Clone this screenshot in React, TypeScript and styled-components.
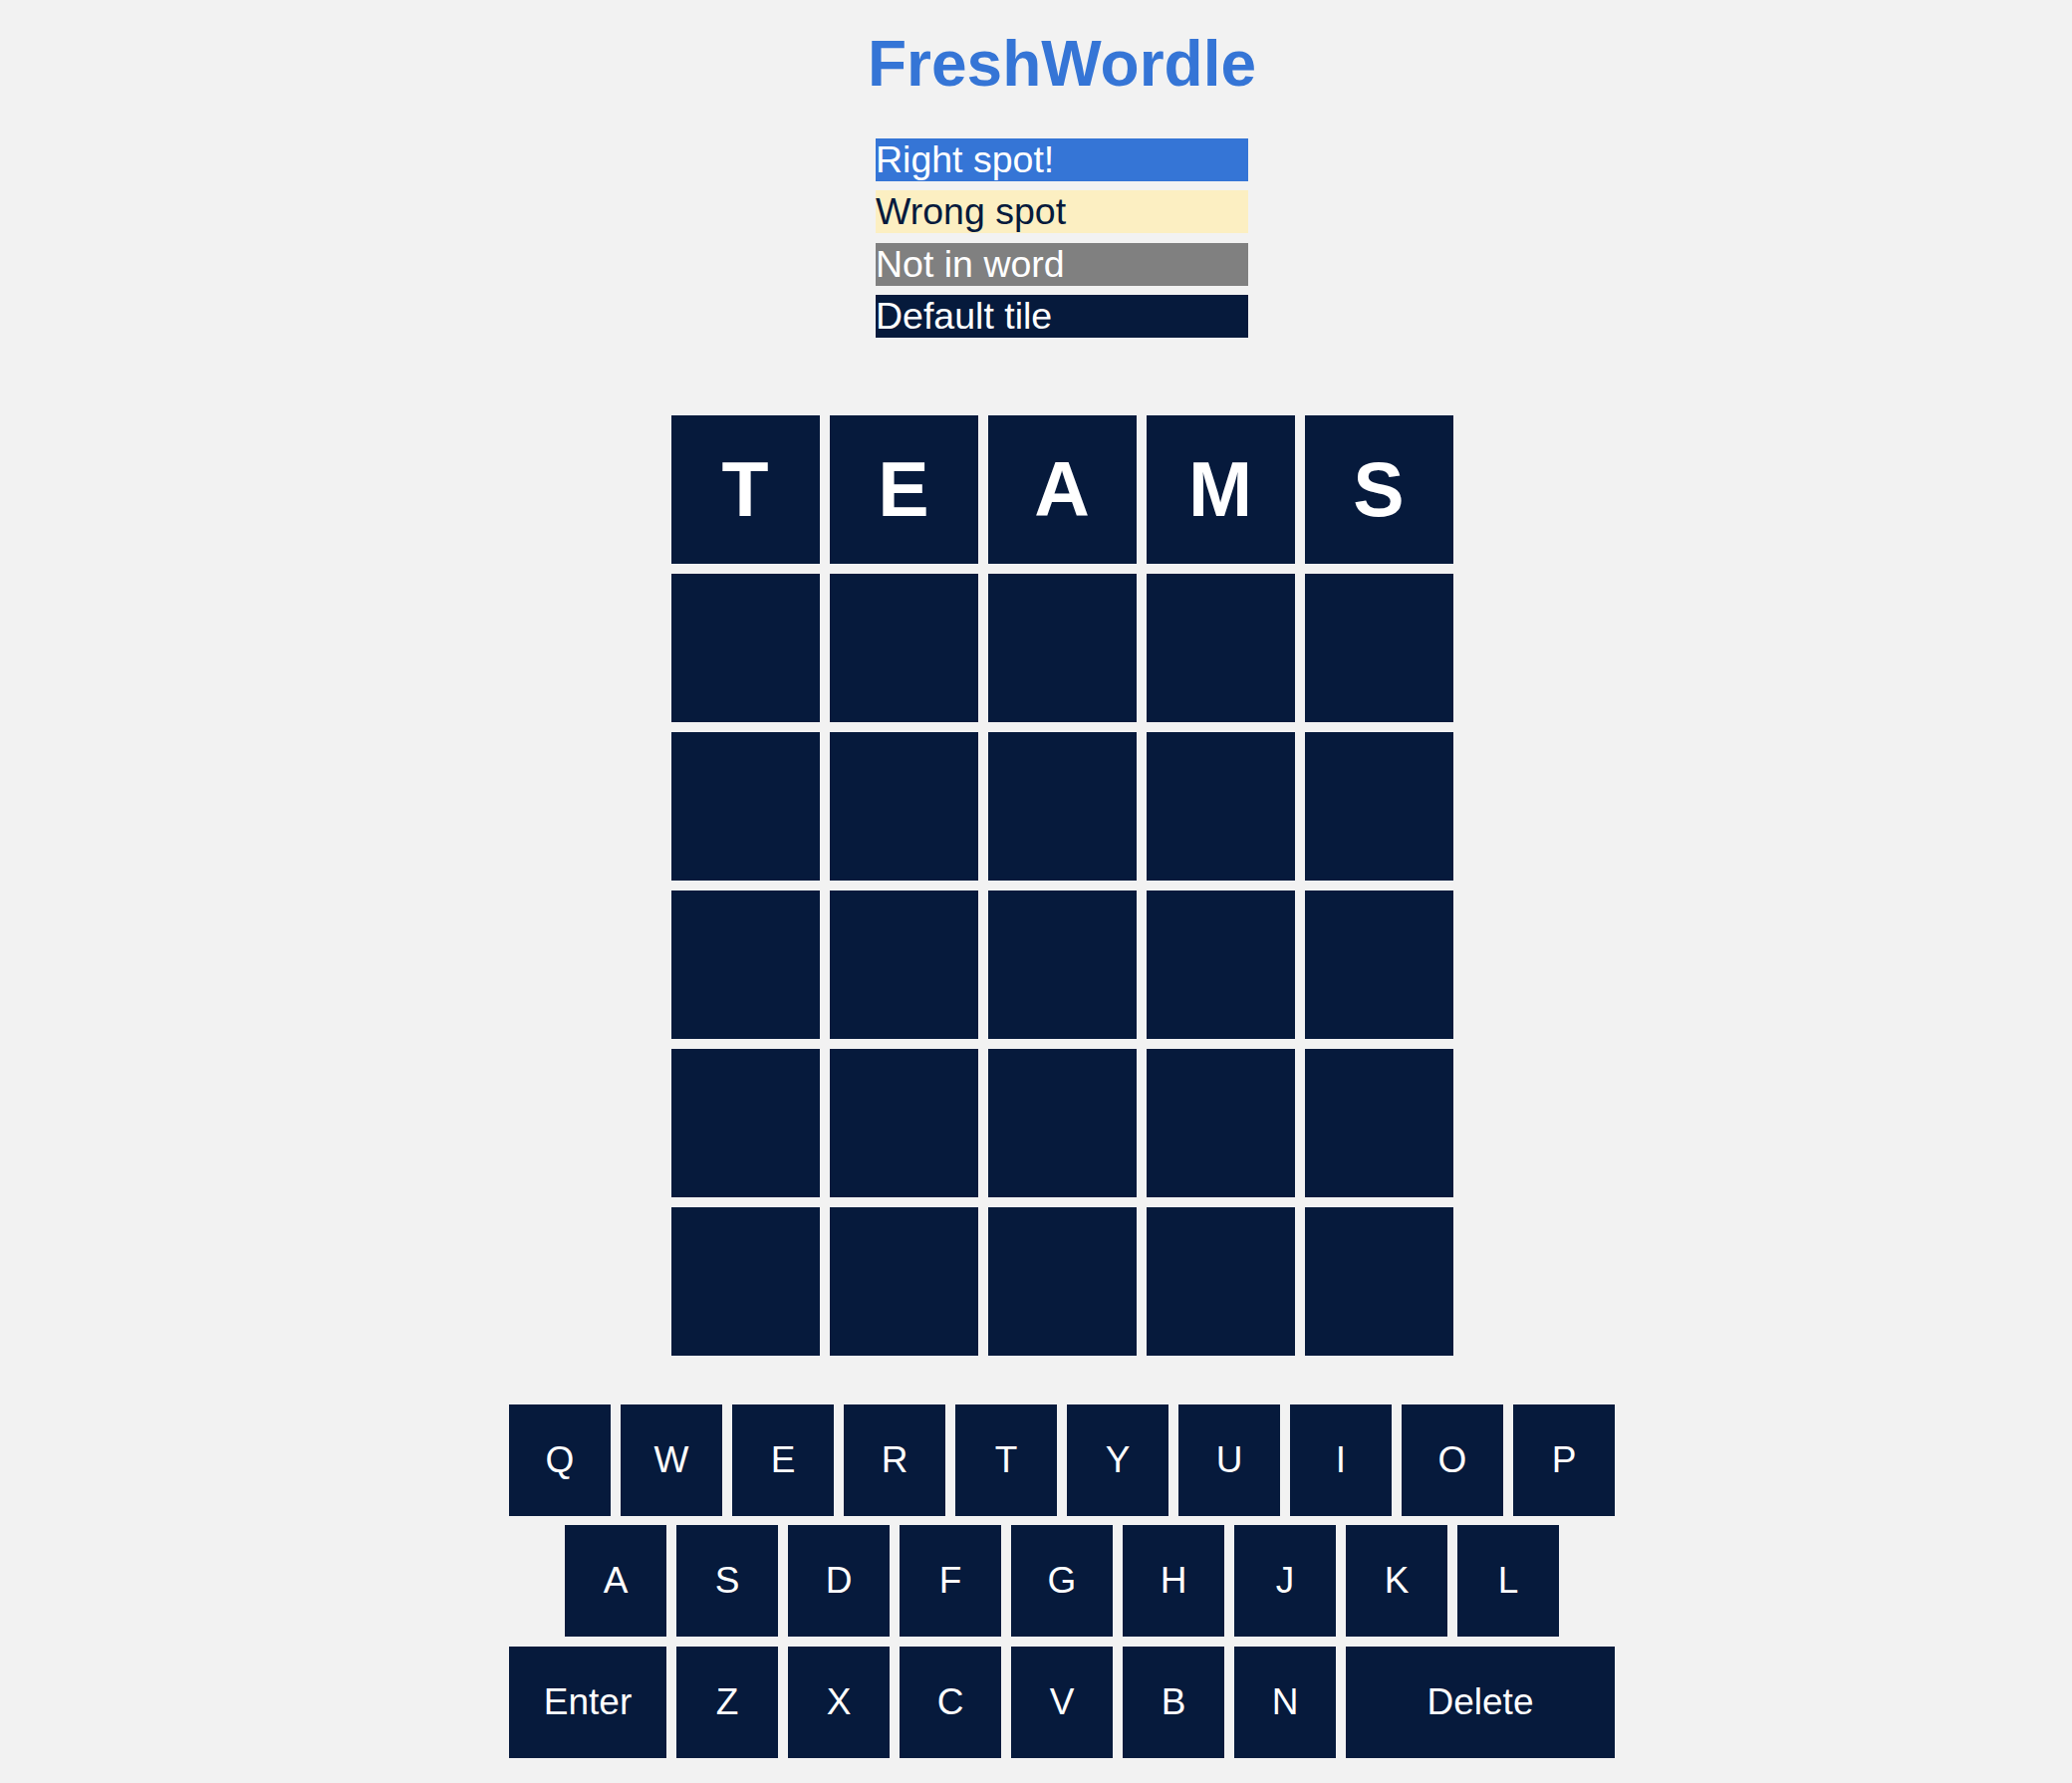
import React from 'react';
import styled, { createGlobalStyle } from 'styled-components';

const NAVY = '#061a3c';

const GlobalStyle = createGlobalStyle`
  html, body {
    margin: 0;
    padding: 0;
    background: #f2f2f2;
  }
  body {
    font-family: 'Liberation Sans', Arial, sans-serif;
  }
`;

type TileState = 'right' | 'wrong' | 'absent' | 'default';

const legendColors: Record<TileState, { bg: string; fg: string }> = {
  right: { bg: '#3575d6', fg: '#ffffff' },
  wrong: { bg: '#fcefc2', fg: NAVY },
  absent: { bg: '#808080', fg: '#ffffff' },
  default: { bg: NAVY, fg: '#ffffff' },
};

const Page = styled.main`
  display: flex;
  flex-direction: column;
  align-items: center;
  padding-left: 52px;
  padding-top: 27px;
`;

const Title = styled.h1`
  margin: 0;
  font-size: 64px;
  font-weight: 700;
  color: #3575d6;
`;

const Legend = styled.ul`
  list-style: none;
  margin: 38px 0 0;
  padding: 0;
  width: 374px;
  display: flex;
  flex-direction: column;
  gap: 9.3px;
`;

const LegendItem = styled.li<{ $state: TileState }>`
  height: 43px;
  line-height: 43px;
  font-size: 37.5px;
  background: ${(p) => legendColors[p.$state].bg};
  color: ${(p) => legendColors[p.$state].fg};
  white-space: nowrap;
`;

const Board = styled.div`
  margin-top: 78px;
  display: grid;
  grid-template-columns: repeat(5, 149px);
  grid-auto-rows: 149px;
  gap: 10px;
`;

const Tile = styled.div`
  background: ${NAVY};
  color: #fff;
  display: flex;
  align-items: center;
  justify-content: center;
  font-size: 77px;
  font-weight: 700;
`;

const Keyboard = styled.div`
  margin-top: 49px;
  display: flex;
  flex-direction: column;
  align-items: center;
  gap: 9.5px;
`;

const KeyRow = styled.div`
  display: flex;
  gap: 10px;
`;

const Key = styled.button<{ $wide?: number }>`
  width: ${(p) => p.$wide ?? 102}px;
  height: 112px;
  border: none;
  padding: 0;
  margin: 0;
  background: ${NAVY};
  color: #fff;
  font-family: 'Liberation Sans', Arial, sans-serif;
  font-size: 37px;
  cursor: pointer;
`;

const guesses = ['TEAMS', '', '', '', '', ''];
const rows = [
  ['Q', 'W', 'E', 'R', 'T', 'Y', 'U', 'I', 'O', 'P'],
  ['A', 'S', 'D', 'F', 'G', 'H', 'J', 'K', 'L'],
  ['Enter', 'Z', 'X', 'C', 'V', 'B', 'N', 'Delete'],
];

const keyWidth = (k: string) => (k === 'Enter' ? 158 : k === 'Delete' ? 270 : undefined);

export default function App() {
  return (
    <>
      <GlobalStyle />
      <Page>
        <Title>FreshWordle</Title>
        <Legend>
          <LegendItem $state="right">Right spot!</LegendItem>
          <LegendItem $state="wrong">Wrong spot</LegendItem>
          <LegendItem $state="absent">Not in word</LegendItem>
          <LegendItem $state="default">Default tile</LegendItem>
        </Legend>
        <Board>
          {guesses.map((word, r) =>
            Array.from({ length: 5 }).map((_, c) => (
              <Tile key={`${r}-${c}`}>{word[c] ?? ''}</Tile>
            ))
          )}
        </Board>
        <Keyboard>
          {rows.map((row, i) => (
            <KeyRow key={i}>
              {row.map((k) => (
                <Key key={k} $wide={keyWidth(k)}>
                  {k}
                </Key>
              ))}
            </KeyRow>
          ))}
        </Keyboard>
      </Page>
    </>
  );
}
